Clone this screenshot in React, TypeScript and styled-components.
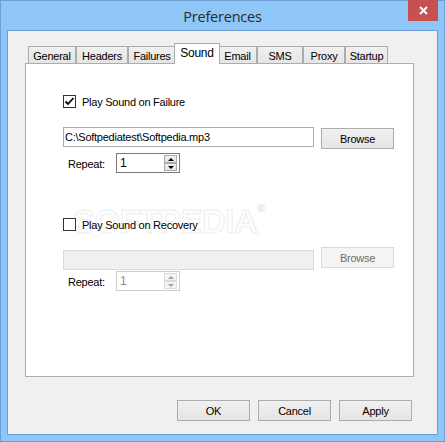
import styled, { createGlobalStyle } from "styled-components";

const GlobalStyle = createGlobalStyle`
  html, body {
    margin: 0;
    padding: 0;
    background: #ffffff;
  }
  * {
    box-sizing: border-box;
  }
`;

const Window = styled.div`
  width: 445px;
  height: 442px;
  border: 1px solid #6f9fd2;
  background: #8dc6f7;
  padding: 0 6px 6px;
  display: flex;
  flex-direction: column;
  font-family: "Liberation Sans", Arial, sans-serif;
  font-size: 11px;
  letter-spacing: -0.25px;
  color: #000;
`;

const TitleBar = styled.div`
  height: 29px;
  position: relative;
  display: flex;
  align-items: center;
  justify-content: center;
`;

const Title = styled.span`
  font-family: "Open Sans", "Noto Sans", sans-serif;
  font-size: 14.5px;
  letter-spacing: -0.2px;
  color: #2b2b2b;
  margin-top: 1px;
`;

const CloseButton = styled.div`
  position: absolute;
  top: -1px;
  right: 0;
  width: 30px;
  height: 21px;
  background: #c75050;
  display: flex;
  align-items: center;
  justify-content: center;
`;

const Client = styled.div`
  flex: 1;
  border: 1px solid #6f9fd2;
  background: #f0f0f0;
  padding: 12px 23px 0 17px;
  display: flex;
  flex-direction: column;
`;

const TabStrip = styled.div`
  height: 20px;
  display: flex;
  align-items: flex-end;
  padding-left: 3px;
`;

const Tab = styled.div<{ $w: number; $active?: boolean }>`
  width: ${(p) => (p.$active ? p.$w + 4 : p.$w)}px;
  height: ${(p) => (p.$active ? 21 : 17)}px;
  margin: ${(p) => (p.$active ? "0 -2px -1px" : "0")};
  position: relative;
  z-index: ${(p) => (p.$active ? 2 : 1)};
  border: 1px solid #acacac;
  border-bottom: none;
  background: ${(p) =>
    p.$active ? "#ffffff" : "linear-gradient(#f0f0f0, #e5e5e5)"};
  display: flex;
  justify-content: center;
  align-items: center;
  padding-bottom: ${(p) => (p.$active ? 3 : 0)}px;
  padding-top: ${(p) => (p.$active ? 0 : 1)}px;
  font-size: ${(p) => (p.$active ? 12 : 11)}px;
`;

const Panel = styled.div`
  height: 314px;
  border: 1px solid #acacac;
  background: #ffffff;
  position: relative;
  padding-left: 37px;
  display: flex;
  flex-direction: column;
`;

const Watermark = styled.div`
  position: absolute;
  left: 47px;
  top: 139px;
  font-family: "Liberation Sans", Arial, sans-serif;
  font-weight: bold;
  font-size: 33px;
  letter-spacing: -0.5px;
  color: #fdfdfd;
  -webkit-text-stroke: 1px #efefef;
  pointer-events: none;
  sup {
    font-size: 10px;
    vertical-align: top;
    -webkit-text-stroke: 0.5px #e8e8e8;
  }
`;

const CheckRow = styled.label<{ $top: number }>`
  display: flex;
  align-items: center;
  gap: 6px;
  height: 13px;
  margin-top: ${(p) => p.$top}px;
  position: relative;
  z-index: 1;
`;

const Box = styled.span`
  width: 13px;
  height: 13px;
  border: 1px solid #333333;
  background: #ffffff;
  display: flex;
  align-items: center;
  justify-content: center;
`;

const FileRow = styled.div<{ $top: number }>`
  display: flex;
  align-items: flex-start;
  gap: 7px;
  margin-top: ${(p) => p.$top}px;
  position: relative;
  z-index: 1;
`;

const PathField = styled.div<{ $disabled?: boolean; $offset: number }>`
  width: 251px;
  height: 20px;
  margin-top: ${(p) => p.$offset}px;
  border: 1px solid ${(p) => (p.$disabled ? "#d9d9d9" : "#acacac")};
  background: ${(p) => (p.$disabled ? "#f0f0f0" : "#ffffff")};
  padding: 0 1px;
  display: flex;
  align-items: center;
`;

const Button = styled.div<{ $disabled?: boolean; $offset?: number }>`
  width: 73px;
  height: 21px;
  margin-top: ${(p) => p.$offset ?? 0}px;
  border: 1px solid ${(p) => (p.$disabled ? "#d9d9d9" : "#acacac")};
  background: ${(p) =>
    p.$disabled ? "#f4f4f4" : "linear-gradient(#f0f0f0, #e5e5e5)"};
  color: ${(p) => (p.$disabled ? "#6d6d6d" : "#000000")};
  display: flex;
  align-items: center;
  justify-content: center;
`;

const RepeatRow = styled.div<{ $top: number; $disabled?: boolean }>`
  display: flex;
  align-items: center;
  margin-top: ${(p) => p.$top}px;
  padding-left: 5px;
  position: relative;
  z-index: 1;
`;

const RepeatLabel = styled.span`
  width: 48px;
  padding-top: 1px;
`;

const Spinner = styled.div<{ $disabled?: boolean }>`
  width: 64px;
  height: 20px;
  border: 1px solid ${(p) => (p.$disabled ? "#cccccc" : "#7a7a7a")};
  background: #ffffff;
  color: ${(p) => (p.$disabled ? "#8a8a8a" : "#000000")};
  display: flex;
  align-items: center;
  justify-content: space-between;
  padding: 0 2px 0 3px;
  font-size: 12px;
`;

const SpinButtons = styled.div`
  display: flex;
  flex-direction: column;
  gap: 0;
  width: 13px;
  height: 16px;
`;

const SpinButton = styled.div<{ $disabled?: boolean }>`
  flex: 1;
  border: 1px solid ${(p) => (p.$disabled ? "#dcdcdc" : "#acacac")};
  background: ${(p) =>
    p.$disabled ? "#f4f4f4" : "linear-gradient(#f2f2f2, #e3e3e3)"};
  display: flex;
  align-items: center;
  justify-content: center;
`;

const Arrow = styled.span<{ $down?: boolean; $disabled?: boolean }>`
  width: 0;
  height: 0;
  border-left: 3px solid transparent;
  border-right: 3px solid transparent;
  ${(p) =>
    p.$down
      ? `border-top: 3px solid ${p.$disabled ? "#a0a0a0" : "#000"};`
      : `border-bottom: 3px solid ${p.$disabled ? "#a0a0a0" : "#000"};`}
`;

const Footer = styled.div`
  display: flex;
  justify-content: flex-end;
  gap: 8px;
  margin-top: 23px;
  padding-right: 2px;
`;

const tabs = [
  { label: "General", w: 48 },
  { label: "Headers", w: 52 },
  { label: "Failures", w: 48 },
  { label: "Sound", w: 42 },
  { label: "Email", w: 39 },
  { label: "SMS", w: 46 },
  { label: "Proxy", w: 42 },
  { label: "Startup", w: 43 },
];

function Check() {
  return (
    <svg width="11" height="11" viewBox="0 0 11 11">
      <path d="M1.5 5.5 L4 8 L9.5 2" fill="none" stroke="#000" strokeWidth="1.8" />
    </svg>
  );
}

function NumberBox({ disabled }: { disabled?: boolean }) {
  return (
    <Spinner $disabled={disabled}>
      <span>1</span>
      <SpinButtons>
        <SpinButton $disabled={disabled}>
          <Arrow $disabled={disabled} />
        </SpinButton>
        <SpinButton $disabled={disabled}>
          <Arrow $down $disabled={disabled} />
        </SpinButton>
      </SpinButtons>
    </Spinner>
  );
}

export default function App() {
  return (
    <>
      <GlobalStyle />
      <Window>
        <TitleBar>
          <Title>Preferences</Title>
          <CloseButton>
            <svg width="9" height="9" viewBox="0 0 9 9">
              <path d="M1 1 L8 8 M8 1 L1 8" stroke="#fff" strokeWidth="2" />
            </svg>
          </CloseButton>
        </TitleBar>
        <Client>
          <TabStrip>
            {tabs.map((t) => (
              <Tab key={t.label} $w={t.w} $active={t.label === "Sound"}>
                {t.label}
              </Tab>
            ))}
          </TabStrip>
          <Panel>
            <Watermark>
              SOFTPEDIA<sup>®</sup>
            </Watermark>
            <CheckRow $top={31}>
              <Box>
                <Check />
              </Box>
              Play Sound on Failure
            </CheckRow>
            <FileRow $top={19}>
              <PathField $offset={0}>C:\Softpediatest\Softpedia.mp3</PathField>
              <Button $offset={1}>Browse</Button>
            </FileRow>
            <RepeatRow $top={4}>
              <RepeatLabel>Repeat:</RepeatLabel>
              <NumberBox />
            </RepeatRow>
            <CheckRow $top={45}>
              <Box />
              Play Sound on Recovery
            </CheckRow>
            <FileRow $top={16}>
              <PathField $disabled $offset={3} />
              <Button $disabled>Browse</Button>
            </FileRow>
            <RepeatRow $top={1}>
              <RepeatLabel>Repeat:</RepeatLabel>
              <NumberBox disabled />
            </RepeatRow>
          </Panel>
          <Footer>
            <Button>OK</Button>
            <Button>Cancel</Button>
            <Button>Apply</Button>
          </Footer>
        </Client>
      </Window>
    </>
  );
}
